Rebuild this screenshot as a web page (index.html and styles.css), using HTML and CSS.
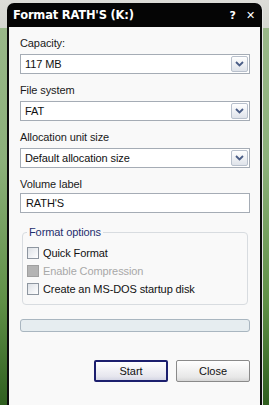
FILE: index.html
```html
<!DOCTYPE html>
<html lang="en">
<head>
    <meta charset="UTF-8">
    <title>Format RATH'S (K:)</title>
    <link rel="stylesheet" href="styles.css">
</head>
<body>
    <div class="window">
        <div class="title-bar">
            <span class="title">Format RATH'S (K:)</span>
            <span class="title-buttons">
                <span class="help">?</span>
                <span class="close-x">&#x2715;</span>
            </span>
        </div>

        <div class="dialog">
            <label class="field-label">Capacity:</label>
            <div class="select">
                <span>117 MB</span>
                <span class="drop">
                    <svg width="9" height="6" viewBox="0 0 9 6"><polyline points="1,1 4.5,4.5 8,1" fill="none" stroke="#4a5d86" stroke-width="1.8"/></svg>
                </span>
            </div>

            <label class="field-label">File system</label>
            <div class="select">
                <span>FAT</span>
                <span class="drop">
                    <svg width="9" height="6" viewBox="0 0 9 6"><polyline points="1,1 4.5,4.5 8,1" fill="none" stroke="#4a5d86" stroke-width="1.8"/></svg>
                </span>
            </div>

            <label class="field-label">Allocation unit size</label>
            <div class="select">
                <span>Default allocation size</span>
                <span class="drop">
                    <svg width="9" height="6" viewBox="0 0 9 6"><polyline points="1,1 4.5,4.5 8,1" fill="none" stroke="#4a5d86" stroke-width="1.8"/></svg>
                </span>
            </div>

            <label class="field-label volume">Volume label</label>
            <div class="textbox">RATH'S</div>

            <div class="group">
                <span class="legend">Format options</span>
                <div class="check"><span class="box"></span>Quick Format</div>
                <div class="check disabled"><span class="box"></span>Enable Compression</div>
                <div class="check"><span class="box"></span>Create an MS-DOS startup disk</div>
            </div>

            <div class="progress"></div>

            <div class="buttons">
                <button class="btn default">Start</button>
                <button class="btn">Close</button>
            </div>
        </div>
    </div>
</body>
</html>
```

FILE: styles.css
```css
/* Page / desktop behind the dialog */
body {
    margin: 0;
    width: 269px;
    height: 405px;
    overflow: hidden;
    font-family: 'Liberation Sans', Arial, sans-serif;
    font-size: 11px;
    letter-spacing: -0.1px;
    color: #111;
    background:
        linear-gradient(to bottom, #dcdcd8 0, #d4d6d0 28px, transparent 28px),
        linear-gradient(to bottom, #9cb98c 0, #8cb07a 40%, #5f8f46 75%, #2f5e1f 100%);
}

.window {
    margin: 3px 0 0 7px;
    width: 255px;
}

/* Title bar */
.title-bar {
    height: 24px;
    background: #050505;
    border-radius: 7px 7px 0 0;
    display: flex;
    align-items: center;
    justify-content: space-between;
    padding: 0 7px 0 6px;
    color: #fff;
    box-shadow: 1px 0 0 #e8e8e8;
}

.title {
    font-family: 'DejaVu Sans', sans-serif;
    font-weight: bold;
    font-size: 11.5px;
    letter-spacing: -0.2px;
}

.title-buttons {
    display: flex;
    gap: 10px;
    font-weight: bold;
    font-family: 'DejaVu Sans', sans-serif;
    font-size: 11px;
}

/* Dialog body */
.dialog {
    background: #f9f9f9;
    border: 2px solid #0c0c0c;
    border-top: none;
    height: 368px;
    padding: 10px 10px 0 11px;
    display: flex;
    flex-direction: column;
    box-shadow: 1px 0 0 #e6e6e6;
}

.field-label {
    line-height: 13px;
    margin-bottom: 4px;
    color: #1a1a1a;
}

.field-label.volume {
    margin-bottom: 2px;
}

.select {
    height: 18px;
    border: 1px solid #a5acb5;
    background: #fff;
    display: flex;
    align-items: center;
    justify-content: space-between;
    padding-left: 4px;
    margin-bottom: 10px;
}

.drop {
    width: 15px;
    height: 14px;
    margin-right: 1px;
    border: 1px solid #b8c0cc;
    border-radius: 2px;
    background: linear-gradient(to bottom, #ffffff, #dfe3ea);
    display: flex;
    align-items: center;
    justify-content: center;
}

.textbox {
    height: 18px;
    line-height: 18px;
    border: 1px solid #a5acb5;
    background: #fff;
    padding-left: 5px;
    margin-bottom: 19px;
}

/* Group box */
.group {
    position: relative;
    margin: 0 2px 0 2px;
    border: 1px solid #d8dce0;
    border-radius: 4px;
    padding: 14px 0 9px 4px;
    display: flex;
    flex-direction: column;
    gap: 6px;
}

.legend {
    position: absolute;
    top: -7px;
    left: 4px;
    padding: 0 2px;
    background: #f9f9f9;
    color: #1f2f6e;
    line-height: 13px;
}

.check {
    display: flex;
    align-items: center;
    gap: 4px;
    line-height: 12px;
}

.box {
    width: 10px;
    height: 10px;
    border: 1px solid #8e96a0;
    background: linear-gradient(135deg, #dde1e6, #ffffff);
}

.check.disabled {
    color: #a8a8a8;
}

.check.disabled .box {
    background: #b4b4b4;
    border-color: #a0a0a0;
}

.progress {
    margin-top: 14px;
    height: 11px;
    border: 1px solid #a9b6c0;
    border-radius: 3px;
    background: #e6edf0;
}

/* Buttons */
.buttons {
    margin-top: 28px;
    display: flex;
    justify-content: flex-end;
    gap: 8px;
}

.btn {
    width: 74px;
    height: 22px;
    font-family: 'Liberation Sans', Arial, sans-serif;
    font-size: 11px;
    color: #111;
    border: 1px solid #8a8a8a;
    border-radius: 2px;
    background: linear-gradient(to bottom, #ffffff, #e8e8e8 80%, #d6d6d6);
    padding: 0;
}

.btn.default {
    border: 2px solid #1c1f6e;
    background: linear-gradient(to bottom, #ffffff, #e6e6ee 80%, #d4d6e4);
}
```
